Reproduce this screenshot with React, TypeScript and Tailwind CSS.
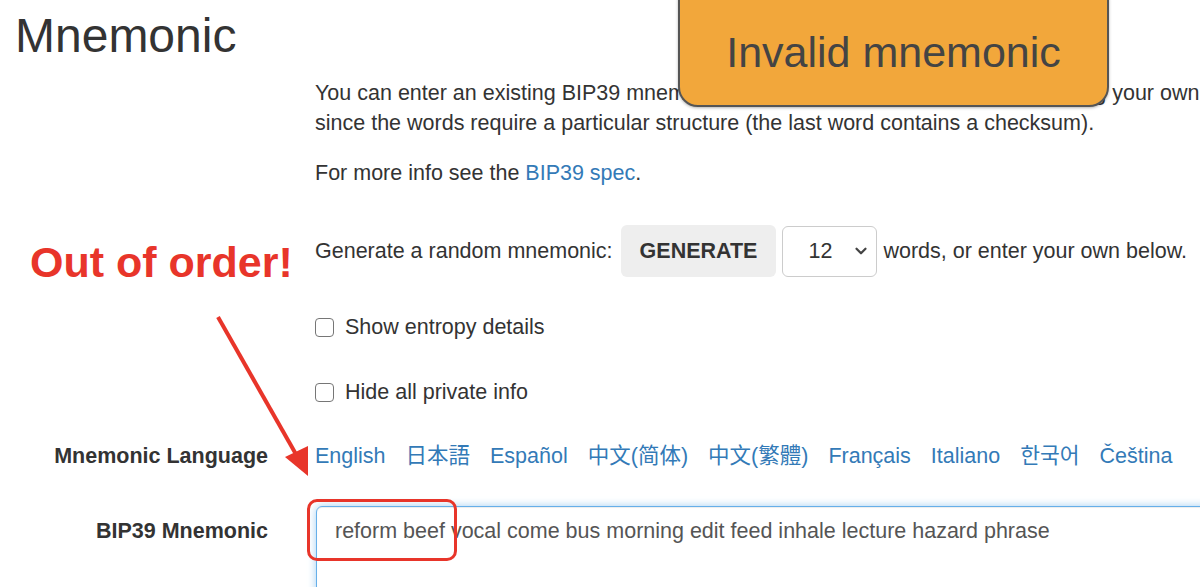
import { ChevronDown } from 'lucide-react';

const languages = [
  { name: 'English', font: '' },
  { name: '日本語', font: "font-['Liberation_Sans','Noto_Sans_CJK_JP',sans-serif]" },
  { name: 'Español', font: '' },
  { name: '中文(简体)', font: "font-['Liberation_Sans','Noto_Sans_CJK_SC',sans-serif]" },
  { name: '中文(繁體)', font: "font-['Liberation_Sans','Noto_Sans_CJK_TC',sans-serif]" },
  { name: 'Français', font: '' },
  { name: 'Italiano', font: '' },
  { name: '한국어', font: "font-['Liberation_Sans','Noto_Sans_CJK_KR',sans-serif]" },
  { name: 'Čeština', font: '' },
];

function Row({ label, children, className = '' }: { label?: string; children: React.ReactNode; className?: string }) {
  return (
    <div className={`flex ${className}`}>
      <div className="w-[268px] shrink-0 text-right font-bold leading-[30px]">{label}</div>
      <div className="ml-[47px] min-w-0 flex-1">{children}</div>
    </div>
  );
}

function Checkbox({ label }: { label: string }) {
  return (
    <label className="flex h-[30px] items-center gap-[11px]">
      <span className="h-[19px] w-[19px] rounded-[4px] border-[1.5px] border-[#767676] bg-white" />
      <span>{label}</span>
    </label>
  );
}

export default function App() {
  return (
    <div className="relative h-[587px] w-[1200px] overflow-hidden bg-white font-['Liberation_Sans',Arial,sans-serif] text-[21.5px] text-[#333]">
      <h2 className="ml-[15px] pt-[9px] text-[48px] leading-[53px]">Mnemonic</h2>

      <Row className="mt-[16px]">
        <p className="whitespace-nowrap leading-[30px]">
          You can enter an existing BIP39 mnemonic, or generate a new random one. Typing your own
          <br />
          since the words require a particular structure (the last word contains a checksum).
        </p>
        <p className="mt-[20px] leading-[30px]">
          For more info see the <a className="text-[#337ab7]">BIP39 spec</a>.
        </p>
      </Row>

      <Row className="mt-[37px]">
        <div className="flex items-center whitespace-nowrap">
          <span>Generate a random mnemonic:</span>
          <button className="ml-[8px] h-[52px] rounded-[6px] bg-[#eeeeee] px-[19px] font-bold">GENERATE</button>
          <div className="ml-[6px] flex h-[51px] w-[95px] items-center rounded-[6px] border border-[#cccccc] pl-[25px] pr-[6px]">
            <span>12</span>
            <ChevronDown size={18} strokeWidth={3} className="ml-auto text-[#444]" />
          </div>
          <span className="ml-[6px]">words, or enter your own below.</span>
        </div>
      </Row>

      <Row className="mt-[35px]">
        <Checkbox label="Show entropy details" />
      </Row>

      <Row className="mt-[35px]">
        <Checkbox label="Hide all private info" />
      </Row>

      <Row label="Mnemonic Language" className="mt-[34px]">
        <div className="flex gap-[20px] whitespace-nowrap leading-[30px] text-[#337ab7]">
          {languages.map((l) => (
            <a key={l.name} className={l.font}>
              {l.name}
            </a>
          ))}
        </div>
      </Row>

      <Row label="BIP39 Mnemonic" className="mt-[45px] items-start">
        <div className="mt-[-10px] ml-[1px] h-[140px] w-[1000px] rounded-[6px] border border-[#66afe9] pl-[18px] pt-[9px] leading-[30px] text-[#555] shadow-[inset_0_1px_1px_rgba(0,0,0,0.075),0_0_8px_rgba(102,175,233,0.6)]">
          reform beef vocal come bus morning edit feed inhale lecture hazard phrase
        </div>
      </Row>

      {/* annotations */}
      <div className="absolute left-[678px] top-[-20px] flex h-[127px] w-[431px] items-center justify-center rounded-[20px] border-2 border-[#555] bg-[#f2a73b] pt-[17px] text-[43px] text-[#444] shadow-[0_1px_3px_rgba(0,0,0,0.3)]">
        Invalid mnemonic
      </div>

      <div className="absolute left-[30px] top-[241px] text-[43px] font-bold leading-none text-[#e8352a]">Out of order!</div>

      <svg className="pointer-events-none absolute left-0 top-0" width="1200" height="587">
        <line x1="218" y1="317" x2="297" y2="456" stroke="#e8352a" strokeWidth="4" />
        <polygon points="308,476 285,457 308,446" fill="#e8352a" />
      </svg>

      <div className="absolute left-[307px] top-[499px] h-[62px] w-[150px] rounded-[10px] border-[3px] border-[#e8352a]" />
    </div>
  );
}
